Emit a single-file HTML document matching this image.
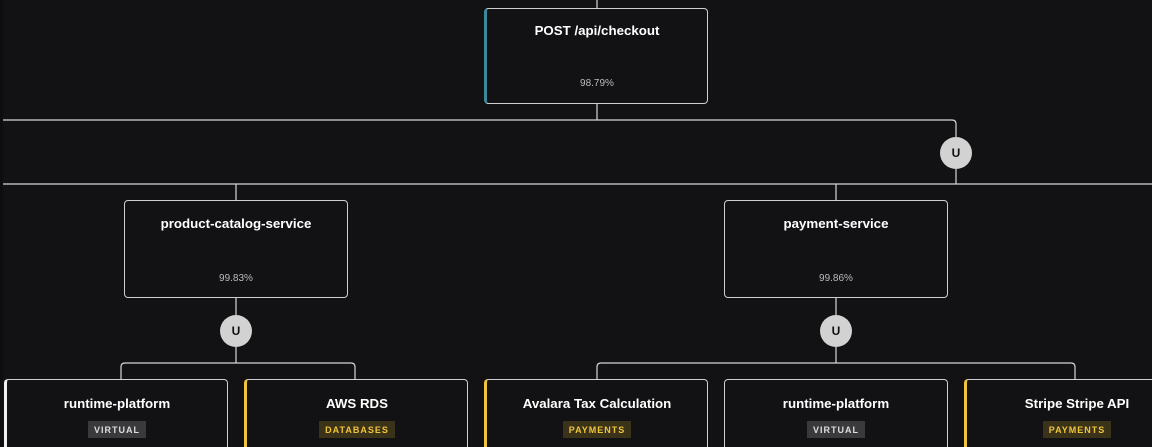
<!DOCTYPE html>
<html><head><style>
html,body{margin:0;width:1152px;height:447px;overflow:hidden}
body{background:#121214;position:relative;font-family:"Liberation Sans",sans-serif}
.strip{position:absolute;left:0;top:0;width:3px;height:447px;background:#0d0d0f}
svg{position:absolute;left:0;top:0}
.card{position:absolute;box-sizing:border-box;border:1px solid #cfcfcf;border-radius:4px;background:#121214;color:#fff;text-align:center}
.t{font-weight:bold;font-size:13.3px;position:absolute;left:0;right:0}
.p{font-size:10px;color:#bbb;position:absolute;left:0;right:0}
.b{display:inline-block;font-size:9px;font-weight:bold;letter-spacing:1px;padding:4px 6px 3px;margin-top:0}
.v{background:#3a3a3d;color:#ddd}
.y{background:#3b321a;color:#f0c53a}
.circ{position:absolute;width:32px;height:32px;border-radius:50%;background:#d2d2d2;color:#111;font-size:12px;font-weight:bold;text-align:center;line-height:32px}
</style></head><body>
<div class="strip"></div>
<svg width="1152" height="447" fill="none" stroke="#d6d6d6" stroke-width="1.2">
<path d="M597 0V8M597 103V120M3 120H952Q956 120 956 124V137M956 169V184M3 184H1152M236 184V200M836 184V200"/>
<path d="M236 297V315M236 347V363M121 379V367Q121 363 125 363H351Q355 363 355 367V379"/>
<path d="M836 297V315M836 347V363M597 379V367Q597 363 601 363H1071Q1075 363 1075 367V379"/>
</svg>
<div class="card" style="left:484px;top:8px;width:224px;height:96px;border-left:3px solid #3a8a9a"><div class="t" style="top:14px">POST /api/checkout</div><div class="p" style="top:69px">98.79%</div></div>
<div class="circ" style="left:940px;top:137px">U</div>
<div class="card" style="left:124px;top:200px;width:224px;height:98px"><div class="t" style="top:15px">product-catalog-service</div><div class="p" style="top:72px">99.83%</div></div>
<div class="card" style="left:724px;top:200px;width:224px;height:98px"><div class="t" style="top:15px">payment-service</div><div class="p" style="top:72px">99.86%</div></div>
<div class="circ" style="left:220px;top:315px">U</div>
<div class="circ" style="left:820px;top:315px">U</div>
<div class="card" style="left:4px;top:379px;width:224px;height:80px;border-left:3px solid #eee"><div class="t" style="top:16px">runtime-platform</div><div style="position:absolute;top:40px;left:0;right:0"><span class="b v">VIRTUAL</span></div></div>
<div class="card" style="left:244px;top:379px;width:224px;height:80px;border-left:3px solid #f0c53a"><div class="t" style="top:16px">AWS RDS</div><div style="position:absolute;top:40px;left:0;right:0"><span class="b y">DATABASES</span></div></div>
<div class="card" style="left:484px;top:379px;width:224px;height:80px;border-left:3px solid #f0c53a"><div class="t" style="top:16px">Avalara Tax Calculation</div><div style="position:absolute;top:40px;left:0;right:0"><span class="b y">PAYMENTS</span></div></div>
<div class="card" style="left:724px;top:379px;width:224px;height:80px"><div class="t" style="top:16px">runtime-platform</div><div style="position:absolute;top:40px;left:0;right:0"><span class="b v">VIRTUAL</span></div></div>
<div class="card" style="left:964px;top:379px;width:224px;height:80px;border-left:3px solid #f0c53a"><div class="t" style="top:16px">Stripe Stripe API</div><div style="position:absolute;top:40px;left:0;right:0"><span class="b y">PAYMENTS</span></div></div>
</body></html>
